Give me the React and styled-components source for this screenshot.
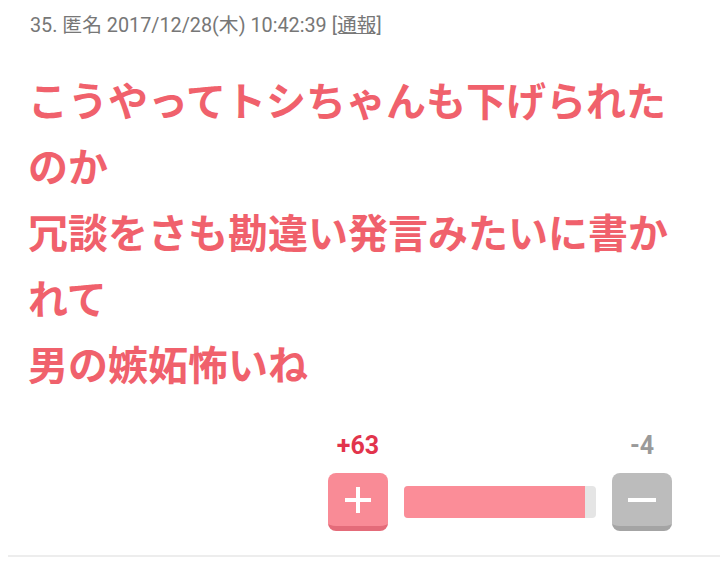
import React from "react";
import styled, { createGlobalStyle } from "styled-components";

const Global = createGlobalStyle`
  html, body { margin: 0; padding: 0; background: #fff; }
  body { font-family: Roboto, "Noto Sans CJK JP", sans-serif; }
`;

const Comment = styled.article`
  width: 720px;
  box-sizing: border-box;
  padding: 12px 0 0 8px;
`;

const Inner = styled.div`
  padding: 0 0 24px 22px;
  border-bottom: 2px solid #ededed;
`;

const Meta = styled.div`
  font-family: Roboto, "Noto Sans CJK JP", sans-serif;
  font-size: 19.8px;
  line-height: 28px;
  color: #777;
`;

const Report = styled.a`
  color: #777;
  text-decoration: underline;
`;

const Body = styled.div`
  margin-top: 26px;
  width: 650px;
  font-family: "Noto Sans CJK JP", sans-serif;
  font-weight: 700;
  font-size: 40px;
  line-height: 66px;
  color: #f0616c;
  margin-left: -2px;
`;

const Votes = styled.div`
  display: flex;
  justify-content: flex-end;
  padding-right: 48px;
  margin-top: 35px;
`;

const VoteBox = styled.div`
  display: grid;
  grid-template-columns: 60px 1fr 60px;
  column-gap: 16px;
  width: 344px;
  align-items: center;
`;

const Count = styled.div`
  text-align: center;
  font-family: Roboto, sans-serif;
  font-weight: 700;
  font-size: 25px;
  line-height: 30px;
  margin-bottom: 12px;
  color: ${(p) => (p.$minus ? "#9a9a9a" : "#e2344c")};
`;

const Btn = styled.div`
  width: 60px;
  height: 58px;
  box-sizing: border-box;
  border-radius: 8px;
  background: ${(p) => (p.$minus ? "#bcbcbc" : "#f98b96")};
  border-bottom: 5px solid ${(p) => (p.$minus ? "#a4a4a4" : "#e46b79")};
  display: flex;
  align-items: center;
  justify-content: center;
`;

const Bar = styled.div`
  height: 32px;
  border-radius: 4px;
  background: #e5e5e5;
  overflow: hidden;
  display: flex;
`;

const Fill = styled.div`
  background: #fb8d98;
  height: 100%;
`;

export default function App() {
  const plus = 63;
  const minus = 4;
  const pct = (plus / (plus + minus)) * 100;
  return (
    <>
      <Global />
      <Comment>
        <Inner>
          <Meta>
            35. 匿名 2017/12/28(木) 10:42:39 <Report>[通報]</Report>
          </Meta>
          <Body>
            こうやってトシちゃんも下げられたのか
            <br />
            冗談をさも勘違い発言みたいに書かれて
            <br />
            男の嫉妬怖いね
          </Body>
          <Votes>
            <VoteBox>
              <Count>+{plus}</Count>
              <div />
              <Count $minus>-{minus}</Count>
              <Btn>
                <svg width="28" height="28" viewBox="0 0 28 28">
                  <path d="M14 1v26M1 14h26" stroke="#fff" strokeWidth="4" />
                </svg>
              </Btn>
              <Bar>
                <Fill style={{ width: `${pct}%` }} />
              </Bar>
              <Btn $minus>
                <svg width="30" height="28" viewBox="0 0 30 28">
                  <path d="M1 14h28" stroke="#fff" strokeWidth="4" />
                </svg>
              </Btn>
            </VoteBox>
          </Votes>
        </Inner>
      </Comment>
    </>
  );
}
